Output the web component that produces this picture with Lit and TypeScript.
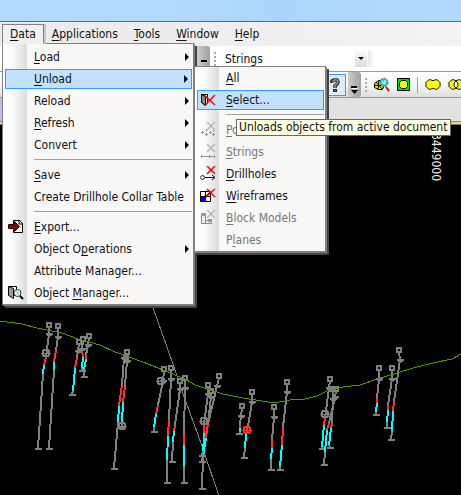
import { LitElement, html, svg, css, nothing, TemplateResult } from "lit";
import { customElement } from "lit/decorators.js";
import { classMap } from "lit/directives/class-map.js";

interface Entry {
  pre?: string;
  key?: string;
  post?: string;
  icon?: string;
  arrow?: boolean;
  disabled?: boolean;
  active?: boolean;
  separator?: boolean;
  children?: Entry[];
}

type Pt = [number, number];

interface Hole {
  head: Pt;
  tick: Pt;
  gray: Pt;
  red: Pt;
  cyan: Pt;
  foot: Pt;
  ring?: Pt;
  hot?: boolean;
}

const SEP: Entry = { separator: true };

const UNLOAD: Entry[] = [
  { key: "A", post: "ll" },
  { key: "S", post: "elect...", icon: "select", active: true },
  SEP,
  { key: "P", post: "oints", icon: "points", disabled: true },
  { key: "S", post: "trings", icon: "strings", disabled: true },
  { key: "D", post: "rillholes", icon: "drillholes" },
  { key: "W", post: "ireframes", icon: "wireframes" },
  { key: "B", post: "lock Models", icon: "blocks", disabled: true },
  { pre: "P", key: "l", post: "anes", disabled: true },
];

const DATA: Entry[] = [
  { key: "L", post: "oad", arrow: true },
  { key: "U", post: "nload", arrow: true, active: true, children: UNLOAD },
  { pre: "Reload", arrow: true },
  { key: "R", post: "efresh", arrow: true },
  { pre: "Convert", arrow: true },
  SEP,
  { key: "S", post: "ave", arrow: true },
  { pre: "Create Drillhole Collar Table" },
  SEP,
  { key: "E", post: "xport...", icon: "export" },
  { pre: "Object O", key: "p", post: "erations", arrow: true },
  { pre: "Attribute Manager..." },
  { pre: "Object ", key: "M", post: "anager...", icon: "manager" },
];

const cross = (color: string) => svg`<path d="M7 0l8 8M15 0l-8 8" stroke=${color} stroke-width="1.500" fill="none"/>`;

const ICONS: Record<string, TemplateResult> = {
  select: svg`<path d="M1.500 2.500h6v8l-2 3-4-3z" fill="#fff" stroke="#000"/><path d="M1.500 2.500l4 2v9l-4-3z" fill="#888" stroke="#000"/>
    <path d="M4 3l11 10M15 3L5 13" stroke="#f00" stroke-width="1.500" fill="none"/>`,
  points: svg`${cross("#bbb")}<path d="M1 10.500h3M2.500 9v3M5 12.500h3M6.500 11v3M9 10.500h3M10.500 9v3M12 12.500h3M13.500 11v3M6.500 7v2M13.500 8v2" stroke="#999" fill="none"/>`,
  strings: svg`${cross("#bbb")}<path d="M1 12.500h14M1.500 11v3M14.500 11v3M9.500 11v3" stroke="#999" fill="none"/>`,
  drillholes: svg`${cross("#f00")}<path d="M4 11.500h11M12 9l3 2.500-3 2.500" stroke="#000080" fill="none"/><path d="M0 11.500l2.500-2.500 2.500 2.500-2.500 2.500z" fill="#fff" stroke="#000"/>`,
  wireframes: svg`<path d="M.5 3.500h10v10H.5zM.5 8.500h10M5.500 3.500v10M5 9l5-5" stroke="#000" fill="#fff"/><path d="M1 9h4v4H1z" fill="#00f"/>
    <path d="M7 1l8 8M15 1L6 9" stroke="#f00" stroke-width="1.500" fill="none"/>`,
  blocks: svg`${cross("#bbb")}<path d="M1.500 3.500h4v10h-4zM5.500 10.500h6v3h-6z" stroke="#888" fill="#eee"/><path d="M1 3h5v3H1zM8 9h4v3H8z" fill="#999"/>`,
  export: svg`<path d="M5.500 1.500h6l3 3v9h-9z" fill="#fff" stroke="#000"/><path d="M11 1v4h4" fill="none" stroke="#000"/>
    <path d="M.5 5.500h6v-3l5 5-5 5v-3h-6z" fill="#8b0000" stroke="#300"/>`,
  manager: svg`<path d="M1 1.500h7.500v9H5" fill="#fff" stroke="#000"/><path d="M.5 1.500l5 2v10l-5-3z" fill="#999" stroke="#000"/>
    <circle cx="9.500" cy="8" r="3.500" fill="#f4ffff" stroke="#333"/><path d="M8 6l2 1v3" stroke="#2cc" fill="none"/><path d="M12 11l3 3" stroke="#000" stroke-width="2"/>`,
};

const h = (head: Pt, tick: Pt, gray: Pt, red: Pt, cyan: Pt, foot: Pt, ring?: Pt, hot?: boolean): Hole =>
  ({ head, tick, gray, red, cyan, foot, ring, hot });

// Window coordinates of the plotted section; the plot's viewBox starts at y = 124.
const HOLES: Hole[] = [
  h([49, 324], [49, 333], [46, 356], [44, 364], [43, 373], [38, 447], [46, 352]),
  h([58, 325], [58, 336], [56, 349], [54, 361], [54, 369], [49, 447]),
  h([79, 341], [78, 350], [77, 356], [75, 367], [73, 390], [72, 393]),
  h([83, 338], [82, 348], [82, 349], [83, 356], [82, 367], [82, 369]),
  h([89, 335], [88, 344], [86, 354], [86, 358], [84, 369], [84, 375]),
  h([126, 357], [124, 357], [122, 384], [119, 405], [118, 421], [114, 467]),
  h([127, 351], [127, 360], [125, 385], [123, 401], [122, 421], [122, 425], [122, 425]),
  h([164, 368], [163, 380], [158, 404], [156, 413], [154, 426], [154, 430], [161, 380]),
  h([171, 367], [171, 378], [169, 418], [168, 435], [167, 459], [167, 481]),
  h([180, 380], [180, 388], [175, 424], [174, 430], [173, 441], [172, 460]),
  h([185, 377], [185, 387], [184, 433], [184, 444], [184, 465], [184, 481]),
  h([208, 384], [208, 393], [204, 423], [204, 432], [203, 455], [202, 487], [204, 420]),
  h([211, 390], [211, 396], [208, 422], [206, 437], [203, 455], [202, 460]),
  h([219, 375], [217, 385], [208, 423], [205, 437], [203, 450], [202, 454]),
  h([242, 405], [241, 415], [240, 424], [240, 427], [240, 431], [239, 432]),
  h([252, 391], [252, 401], [248, 425], [246, 433], [245, 447], [244, 456], [247, 429], true),
  h([274, 406], [274, 416], [272, 439], [272, 447], [271, 458], [271, 468]),
  h([287, 381], [287, 391], [283, 426], [282, 444], [280, 465], [280, 468]),
  h([330, 378], [329, 387], [325, 417], [324, 424], [322, 446], [322, 447], [325, 413]),
  h([336, 388], [335, 396], [329, 422], [327, 429], [325, 451], [324, 463]),
  h([333, 388], [333, 398], [332, 422], [331, 427], [329, 444], [330, 446]),
  h([379, 367], [379, 378], [377, 397], [377, 402], [376, 411], [376, 413]),
  h([392, 367], [392, 378], [388, 404], [388, 409], [387, 421], [387, 426]),
  h([399, 349], [400, 359], [394, 401], [393, 410], [392, 430], [391, 438]),
];

const TERRAIN =
  "0,320 22,323 37,327 62,332 78,338 100,344 115,351 143,361 163,369 187,379 195,384 223,393 243,397 262,400 274,402 290,399 305,398 317,395 327,390 343,386 360,384 377,378 397,372 413,367 433,362 452,358 461,353";

@customElement("app-root")
export class AppRoot extends LitElement {
  static styles = css`
    :host {
      display: flex;
      flex-direction: column;
      min-height: 100vh;
      overflow: hidden;
      position: relative;
      background: #000;
      color: #111;
      font: 12px/16px "DejaVu Sans Condensed", "Open Sans", sans-serif;
    }
    button,
    select {
      font: inherit;
      color: inherit;
      background: none;
      border: 0;
      margin: 0;
      padding: 0;
      text-align: left;
    }
    svg { display: block; flex: none; }
    ul { list-style: none; margin: 0; padding: 0; }
    u { text-underline-offset: 2px; text-decoration-skip-ink: none; }
    .title {
      height: 21px;
      background: linear-gradient(90deg, #b2dafe 0 38%, #acd5fb 60%, #b2d9fd);
      border-bottom: 1px solid #5b6b7e;
    }
    .menubar {
      display: flex;
      height: 24px;
      padding: 0 2px;
      background: linear-gradient(90deg, #ebebeb, #f2f2f2);
    }
    .top { position: relative; padding-top: 2px; }
    .top > button { height: 20px; padding: 0 7px; border: 1px solid transparent; white-space: nowrap; }
    .top.open > button {
      position: relative;
      z-index: 3;
      background: #f0f0f0;
      border-color: #808080;
      border-bottom-color: #f0f0f0;
      box-shadow: 2px 0 0 #c8c8c8;
    }
    .menu {
      position: absolute;
      z-index: 2;
      box-sizing: border-box;
      border: 1px solid #808080;
      padding: 2px 1px 0 0;
      background: linear-gradient(90deg, #fff, #fcfcfc 8px, #dcdcdc 24px, #f9f8f7 24px);
      box-shadow: 1px 1px 0 #808080, 3px 3px 0 #444;
    }
    .main { top: 21px; left: 0; width: 192px; }
    .sub { top: -3px; left: 191px; width: 132px; padding-top: 0; }
    .menu li { position: relative; }
    .row {
      display: flex;
      align-items: center;
      box-sizing: border-box;
      width: 100%;
      height: 22px;
      padding: 0 2px 0 5px;
      white-space: nowrap;
    }
    .row.active {
      width: calc(100% - 2px);
      height: 20px;
      margin: 1px 0 1px 2px;
      padding: 0 2px;
      background: #c2e0ff;
      border: 1px solid #3399ff;
    }
    .row:disabled { color: #777; }
    .slot { flex: none; width: 16px; height: 16px; margin-right: 10px; }
    .label { flex: 1; }
    .sep { height: 8px; padding-left: 31px; }
    .sep::before { content: ""; display: block; height: 1px; border-bottom: 1px solid #a0a0a0; padding-top: 2px; }
    .bar { display: flex; align-items: center; }
    .first { height: 25px; background: #fff; padding-left: 197px; }
    .second {
      height: 25px;
      border-top: 1px solid #999;
      border-bottom: 1px solid #999;
      background: linear-gradient(#fff, #f6f6f6 50%, #dedede);
      padding-left: 324px;
    }
    .more {
      display: flex;
      flex: none;
      align-items: flex-end;
      justify-content: center;
      width: 13px;
      height: 100%;
      padding-bottom: 3px;
      box-sizing: border-box;
      background: linear-gradient(90deg, #ccc, #9f9f9f);
      border-radius: 0 3px 3px 0;
    }
    .grip {
      flex: none;
      width: 2px;
      height: 14px;
      margin-left: 4px;
      background: repeating-linear-gradient(#a8a8a8 0 2px, transparent 2px 4px);
    }
    .combo { display: flex; align-items: center; width: 142px; position: relative; padding-left: 9px; }
    select { appearance: none; width: 100%; height: 18px; outline: 0; }
    .drop {
      position: absolute;
      right: 0;
      display: flex;
      align-items: center;
      justify-content: center;
      width: 12px;
      height: 16px;
      background: linear-gradient(#f8f8f8, #ddd);
      pointer-events: none;
    }
    .tail { width: 6px; height: 16px; margin-left: 1px; background: linear-gradient(90deg, #e4e4e4, #fff); }
    .help {
      display: flex;
      flex: none;
      align-items: center;
      justify-content: center;
      width: 20px;
      height: 20px;
      box-sizing: content-box;
      border: 1px solid #3399ff;
      background: #dcebfc;
      margin-right: 2px;
    }
    .tool { display: flex; align-items: center; flex: none; margin-left: 7px; }
    .rule { flex: none; width: 1px; height: 16px; margin-left: 7px; background: #a0a0a0; }
    .docs {
      height: 23px;
      background: linear-gradient(90deg, #c9b8f0, #e2e2e2 70%);
      border-bottom: 1px solid #888;
    }
    .frame { height: 2px; background: #f0d878; border-bottom: 1px solid #777; }
    .view { flex: 1; min-height: 371px; overflow: hidden; background: #000; }
    .view svg { width: 100%; height: 100%; }
    .axis { fill: #eee; font-size: 12px; }
    .tip {
      position: absolute;
      z-index: 5;
      top: 119px;
      left: 236px;
      padding: 0 3px 0 2px;
      border: 1px solid #666;
      background: #ffffe1;
      line-height: 15px;
      white-space: nowrap;
    }
  `;

  private text(e: Entry) {
    return html`<span class="label">${e.pre ?? nothing}${e.key ? html`<u>${e.key}</u>` : nothing}${e.post ?? nothing}</span>`;
  }

  private menu(entries: Entry[], kind: string): TemplateResult {
    return html`<ul class="menu ${kind}" role="menu">
      ${entries.map((e) =>
        e.separator
          ? html`<li class="sep" role="separator"></li>`
          : html`<li role="none">
              <button class=${classMap({ row: true, active: !!e.active })} role="menuitem" ?disabled=${!!e.disabled}>
                <span class="slot">${e.icon ? html`<svg width="16" height="16" viewBox="0 0 16 16">${ICONS[e.icon]}</svg>` : nothing}</span>
                ${this.text(e)}
                ${e.arrow ? html`<svg width="6" height="8" viewBox="0 0 6 8"><path d="M1 0l4 4-4 4z" fill="#000" /></svg>` : nothing}
              </button>
              ${e.children ? this.menu(e.children, "sub") : nothing}
            </li>`
      )}
    </ul>`;
  }

  private hole(d: Hole) {
    const seg = (a: Pt, b: Pt, c: string) =>
      svg`<line x1=${a[0]} y1=${a[1]} x2=${b[0]} y2=${b[1]} stroke=${c} stroke-width="2"/>`;
    const [tx, ty] = d.tick;
    const [fx, fy] = d.foot;
    const ringColor = d.hot ? "#ff3030" : "#808080";
    return svg`
      ${seg([d.head[0], d.head[1] + 2], d.tick, "#808080")}
      ${seg(d.tick, d.gray, "#808080")}
      ${seg(d.gray, d.red, "#ff3030")}
      ${seg(d.red, d.cyan, "#00ffff")}
      ${seg(d.cyan, d.foot, "#808080")}
      <circle cx=${d.head[0]} cy=${d.head[1]} r="2.500" fill="none" stroke="#808080" stroke-width="2"/>
      <path d="M${tx - 3} ${ty}h7M${tx - 2} ${ty + 1}h5M${fx - 3} ${fy + 1}h7" stroke="#808080" stroke-width="2"/>
      ${d.ring
        ? svg`<circle cx=${d.ring[0]} cy=${d.ring[1]} r="3.500" fill="none" stroke=${ringColor} stroke-width="2"/>
            <path d="M${d.ring[0] - 5} ${d.ring[1]}h10M${d.ring[0]} ${d.ring[1] - 4}v8" stroke=${ringColor}/>`
        : nothing}`;
  }

  render() {
    const tops: Entry[] = [
      { key: "D", post: "ata", children: DATA },
      { key: "A", post: "pplications" },
      { key: "T", post: "ools" },
      { key: "W", post: "indow" },
      { key: "H", post: "elp" },
    ];
    return html`
      <header class="title"></header>
      <nav class="menubar">
        ${tops.map(
          (t) => html`<div class=${classMap({ top: true, open: !!t.children })}>
            <button>${this.text(t)}</button>
            ${t.children ? this.menu(t.children, "main") : nothing}
          </div>`
        )}
      </nav>
      <div class="bar first">
        <button class="more" aria-label="More"><svg width="6" height="8"><path d="M0 1h6" stroke="#000" stroke-width="2" /></svg></button>
        <span class="grip"></span>
        <label class="combo">
          <select aria-label="Object type"><option>Strings</option></select>
          <span class="drop"><svg width="6" height="4"><path d="M0 0h6l-3 3z" /></svg></span>
        </label>
        <span class="tail"></span>
      </div>
      <div class="bar second">
        <button class="help" aria-label="Help">
          <svg width="10" height="14" viewBox="0 0 10 14"><path d="M2 5V3l2-1h3l1 2-1 2-2 2v2" fill="none" stroke="#222" stroke-width="3.500"/><path d="M3 11h4v3H3z" fill="#222"/><path d="M2 4l2-2h3l1 2-3 4v2M5 12v1" fill="none" stroke="#999" stroke-width="1.500"/></svg>
        </button>
        <button class="more" aria-label="Toolbar options"><svg width="7" height="8"><path d="M0 1h6" stroke="#000" stroke-width="2"/><path d="M0 4h7l-3.500 4z"/><path d="M1 2.500h6" stroke="#fff"/></svg></button>
        <span class="grip"></span>
        <button class="tool" aria-label="Examine">
          <svg width="16" height="14" viewBox="0 0 16 14"><path d="M4.500 2.500h4l2 4-2 5h-4L.5 9.500v-4z" fill="#ee0" stroke="#000"/><path d="M1 7.500h8M5 2L4 12M2 4l6 7" stroke="#000" fill="none"/><path d="M12 9l3 4" stroke="#c00" stroke-width="2"/><circle cx="10" cy="4.500" r="4" fill="#3cc" stroke="#267" stroke-dasharray="2 1"/><path d="M8 3l2 3M11 2v4" stroke="#dff"/></svg>
        </button>
        <button class="tool" aria-label="Zoom extents">
          <svg width="13" height="13" viewBox="0 0 13 13"><path d="M.5.5h12v12H.5z" fill="#0d0" stroke="#000"/><path d="M4.500 2.500h4l2 2v4l-2 2h-4l-2-2v-4z" fill="#ff0" stroke="#000"/></svg>
        </button>
        <span class="rule"></span>
        <button class="tool" aria-label="Union">
          <svg width="16" height="11" viewBox="0 0 17 11"><path d="M4 .5h2l2.500 1 2.500-1h2l3 3v4l-3 3h-2l-2.500-1-2.500 1H4l-3-3v-4z" fill="#ff0" stroke="#000"/></svg>
        </button>
        <button class="tool" aria-label="Intersection">
          <svg width="16" height="11" viewBox="0 0 17 11"><path d="M4 .5h2l2.500 1 2.500-1h2l3 3v4l-3 3h-2l-2.500-1-2.500 1H4l-3-3v-4z" fill="#ff0" stroke="#000"/><path d="M8.500 1.500l2 2.500v3l-2 2.500-2-2.500V4z" fill="#fff" stroke="#000"/></svg>
        </button>
      </div>
      <div class="docs"></div>
      <div class="frame"></div>
      <main class="view">
        <svg viewBox="0 124 461 371" preserveAspectRatio="xMinYMin slice">
          <g shape-rendering="crispEdges">
            <polyline points="152,304 173,363 182,390 202,445 219,495" fill="none" stroke="#808080" />
            ${HOLES.map((d) => this.hole(d))}
            <polyline points=${TERRAIN} fill="none" stroke="#4c9900" />
          </g>
          <text class="axis" transform="translate(432 132) rotate(90)">3449000</text>
        </svg>
      </main>
      <div class="tip" role="tooltip">Unloads objects from active document</div>
    `;
  }
}
